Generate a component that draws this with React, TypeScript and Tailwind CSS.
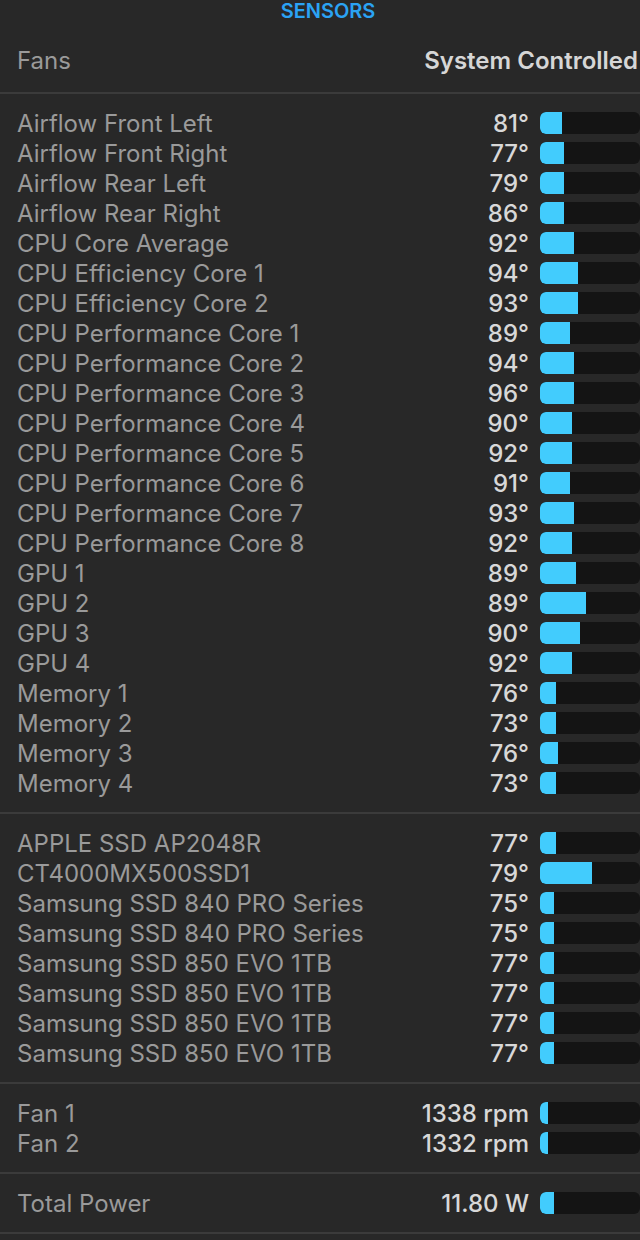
import React from 'react'

type Row = { label: string; value: string; fill: number }

const temps: Row[] = [
  { label: 'Airflow Front Left', value: '81°', fill: 22 },
  { label: 'Airflow Front Right', value: '77°', fill: 24 },
  { label: 'Airflow Rear Left', value: '79°', fill: 24 },
  { label: 'Airflow Rear Right', value: '86°', fill: 24 },
  { label: 'CPU Core Average', value: '92°', fill: 34 },
  { label: 'CPU Efficiency Core 1', value: '94°', fill: 38 },
  { label: 'CPU Efficiency Core 2', value: '93°', fill: 38 },
  { label: 'CPU Performance Core 1', value: '89°', fill: 30 },
  { label: 'CPU Performance Core 2', value: '94°', fill: 34 },
  { label: 'CPU Performance Core 3', value: '96°', fill: 34 },
  { label: 'CPU Performance Core 4', value: '90°', fill: 32 },
  { label: 'CPU Performance Core 5', value: '92°', fill: 32 },
  { label: 'CPU Performance Core 6', value: '91°', fill: 30 },
  { label: 'CPU Performance Core 7', value: '93°', fill: 34 },
  { label: 'CPU Performance Core 8', value: '92°', fill: 32 },
  { label: 'GPU 1', value: '89°', fill: 36 },
  { label: 'GPU 2', value: '89°', fill: 46 },
  { label: 'GPU 3', value: '90°', fill: 40 },
  { label: 'GPU 4', value: '92°', fill: 32 },
  { label: 'Memory 1', value: '76°', fill: 16 },
  { label: 'Memory 2', value: '73°', fill: 16 },
  { label: 'Memory 3', value: '76°', fill: 18 },
  { label: 'Memory 4', value: '73°', fill: 16 },
]

const disks: Row[] = [
  { label: 'APPLE SSD AP2048R', value: '77°', fill: 16 },
  { label: 'CT4000MX500SSD1', value: '79°', fill: 52 },
  { label: 'Samsung SSD 840 PRO Series', value: '75°', fill: 14 },
  { label: 'Samsung SSD 840 PRO Series', value: '75°', fill: 14 },
  { label: 'Samsung SSD 850 EVO 1TB', value: '77°', fill: 14 },
  { label: 'Samsung SSD 850 EVO 1TB', value: '77°', fill: 14 },
  { label: 'Samsung SSD 850 EVO 1TB', value: '77°', fill: 14 },
  { label: 'Samsung SSD 850 EVO 1TB', value: '77°', fill: 14 },
]

const fans: Row[] = [
  { label: 'Fan 1', value: '1338 rpm', fill: 8 },
  { label: 'Fan 2', value: '1332 rpm', fill: 8 },
]

const power: Row[] = [{ label: 'Total Power', value: '11.80 W', fill: 14 }]

function SensorRow({ row }: { row: Row }) {
  return (
    <div className="flex h-[30px] items-center">
      <div className="flex-1 truncate pt-[2px] pl-[17px] text-[#9a9a9a]">{row.label}</div>
      <div className="pt-[2px] pr-[11px] font-medium text-[#d8d8d8]">{row.value}</div>
      <div className="h-[22px] w-[100px] shrink-0 overflow-hidden rounded-[6px] bg-[#141414]">
        <div className="h-full rounded-l-[5px] bg-[#42ccfd]" style={{ width: row.fill }} />
      </div>
    </div>
  )
}

function Group({ rows }: { rows: Row[] }) {
  return (
    <div className="py-[14px]">
      {rows.map((r, i) => (
        <SensorRow key={i} row={r} />
      ))}
    </div>
  )
}

function Divider() {
  return <div className="h-[2px] bg-[#3b3b3b]" />
}

export default function App() {
  return (
    <div
      className="h-[1240px] w-[640px] overflow-hidden bg-[#282828] text-[24px] leading-[30px]"
      style={{ fontFamily: 'Inter, "Noto Sans", sans-serif' }}
    >
      <div className="h-[22px] pl-[16px] text-center text-[20px] leading-[22px] font-semibold text-[#2ba3f4]">SENSORS</div>
      <div className="mt-[23px] mb-[17px] flex h-[30px] items-center pt-[2px]">
        <div className="flex-1 pl-[17px] text-[#9a9a9a]">Fans</div>
        <div className="pr-[2px] font-semibold text-[#d6d6d6]">System Controlled</div>
      </div>
      <Divider />
      <Group rows={temps} />
      <Divider />
      <Group rows={disks} />
      <Divider />
      <Group rows={fans} />
      <Divider />
      <Group rows={power} />
      <Divider />
    </div>
  )
}
